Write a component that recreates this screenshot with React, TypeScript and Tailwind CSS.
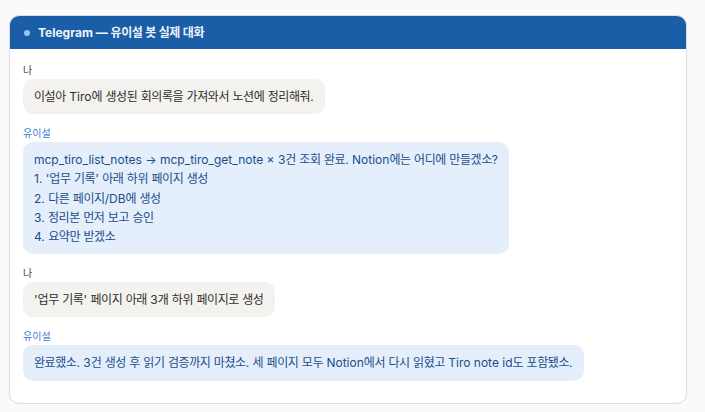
const font = { fontFamily: 'Inter, "Noto Sans CJK KR", sans-serif' };

function Txt({ text }: { text: string }) {
  const parts = text.split(/([\uAC00-\uD7A3]+)/);
  return (
    <>
      {parts.map((p, i) =>
        /[\uAC00-\uD7A3]/.test(p) ? (
          <span key={i} className="tracking-[-0.035em]">
            {p}
          </span>
        ) : (
          <span key={i}>{p}</span>
        )
      )}
    </>
  );
}

function UserMsg({ text }: { text: string }) {
  return (
    <div>
      <div className="text-[10px] leading-[14px] text-[#444]">나</div>
      <div className="mt-[2px] inline-block rounded-[10px] bg-[#f3f2ee] px-[11px] py-[8px] text-[12px] leading-[19px] text-[#2e2e2e]">
        <Txt text={text} />
      </div>
    </div>
  );
}

function BotMsg({ lines }: { lines: string[] }) {
  return (
    <div>
      <div className="text-[10px] leading-[14px] text-[#3b7bd0]">유이설</div>
      <div className="mt-[2px] inline-block rounded-[10px] bg-[#e4effb] px-[11px] py-[8px] text-[12px] leading-[19.3px] text-[#1d4c8c]">
        {lines.map((l, i) => (
          <div key={i}>
            <Txt text={l} />
          </div>
        ))}
      </div>
    </div>
  );
}

export default function App() {
  return (
    <div className="min-h-screen bg-[#fafafa] pl-[9px] pr-[18px] pt-[15px]" style={font}>
      <div className="overflow-hidden rounded-[10px] border border-[#dcdcdc] bg-white">
        <div className="flex h-[33px] items-center gap-[8px] bg-[#1b5ea8] px-[14px]">
          <span className="h-[6px] w-[6px] rounded-full bg-[#9cc3ee]" />
          <span className="text-[12px] font-bold text-[#eef4fb]">
            <Txt text="Telegram — 유이설 봇 실제 대화" />
          </span>
        </div>
        <div className="flex flex-col gap-[12px] px-[13px] pb-[22px] pt-[14px]">
          <UserMsg text="이설아 Tiro에 생성된 회의록을 가져와서 노션에 정리해줘." />
          <BotMsg
            lines={[
              "mcp_tiro_list_notes → mcp_tiro_get_note × 3건 조회 완료. Notion에는 어디에 만들겠소?",
              "1. '업무 기록' 아래 하위 페이지 생성",
              "2. 다른 페이지/DB에 생성",
              "3. 정리본 먼저 보고 승인",
              "4. 요약만 받겠소",
            ]}
          />
          <UserMsg text="'업무 기록' 페이지 아래 3개 하위 페이지로 생성" />
          <BotMsg lines={["완료했소. 3건 생성 후 읽기 검증까지 마쳤소. 세 페이지 모두 Notion에서 다시 읽혔고 Tiro note id도 포함됐소."]} />
        </div>
      </div>
    </div>
  );
}
